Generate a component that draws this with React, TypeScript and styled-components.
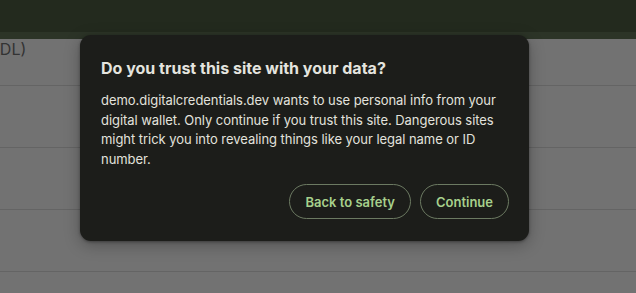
import * as React from 'react';
import styled, { createGlobalStyle } from 'styled-components';

const GlobalStyle = createGlobalStyle`
  html, body {
    margin: 0;
    padding: 0;
    background: #727272;
    overflow: hidden;
  }
  body {
    font-family: Inter, "Noto Sans", sans-serif;
    -webkit-font-smoothing: antialiased;
  }
`;

const Page = styled.div`
  position: relative;
  width: 636px;
  height: 293px;
  overflow: hidden;
  background: #727272;
`;

const TopBar = styled.div`
  height: 32px;
  background: #232a1e;
`;

const SubBar = styled.div`
  height: 7px;
  background: #2c3427;
`;

const List = styled.div`
  display: flex;
  flex-direction: column;
`;

const Row = styled.div<{ $height: number }>`
  height: ${(p) => p.$height}px;
  border-bottom: 1px solid #646464;
  box-sizing: border-box;
  font-size: 16px;
  color: #333333;
`;

const RowLabel = styled.span`
  display: inline-block;
  margin: -2px 0 0 -6px;
  line-height: 14px;
`;

const Dialog = styled.div`
  position: absolute;
  left: 80px;
  top: 35px;
  width: 449px;
  box-sizing: border-box;
  padding: 22px 20px 22px 21px;
  background: #1c1d1a;
  border-radius: 11px;
  box-shadow: 0 4px 16px rgba(0, 0, 0, 0.28), 0 1px 3px rgba(0, 0, 0, 0.35);
`;

const Title = styled.h2`
  margin: 0 0 12px;
  font-size: 16px;
  font-weight: 700;
  line-height: 22px;
  color: #e4e4df;
`;

const Body = styled.p`
  margin: 0;
  font-size: 13px;
  line-height: 19.5px;
  color: #e2e2dd;
  letter-spacing: -0.05px;
`;

const Actions = styled.div`
  display: flex;
  justify-content: flex-end;
  gap: 9px;
  margin-top: 15px;
`;

const PillButton = styled.button`
  height: 35px;
  padding: 0 15px;
  border: 1px solid #6c7a62;
  border-radius: 18px;
  background: transparent;
  color: #a7d08c;
  font-family: Inter, "Noto Sans", sans-serif;
  font-size: 13px;
  font-weight: 600;
  cursor: pointer;
`;

export default function App() {
  return (
    <>
      <GlobalStyle />
      <Page>
        <TopBar />
        <SubBar />
        <List>
          <Row $height={47}>
            <RowLabel>(DL)</RowLabel>
          </Row>
          <Row $height={62} />
          <Row $height={62} />
          <Row $height={62} />
        </List>
        <Dialog role="dialog" aria-labelledby="trust-title">
          <Title id="trust-title">Do you trust this site with your data?</Title>
          <Body>
            demo.digitalcredentials.dev wants to use personal info from your digital wallet. Only
            continue if you trust this site. Dangerous sites might trick you into revealing things
            like your legal name or ID number.
          </Body>
          <Actions>
            <PillButton>Back to safety</PillButton>
            <PillButton>Continue</PillButton>
          </Actions>
        </Dialog>
      </Page>
    </>
  );
}
